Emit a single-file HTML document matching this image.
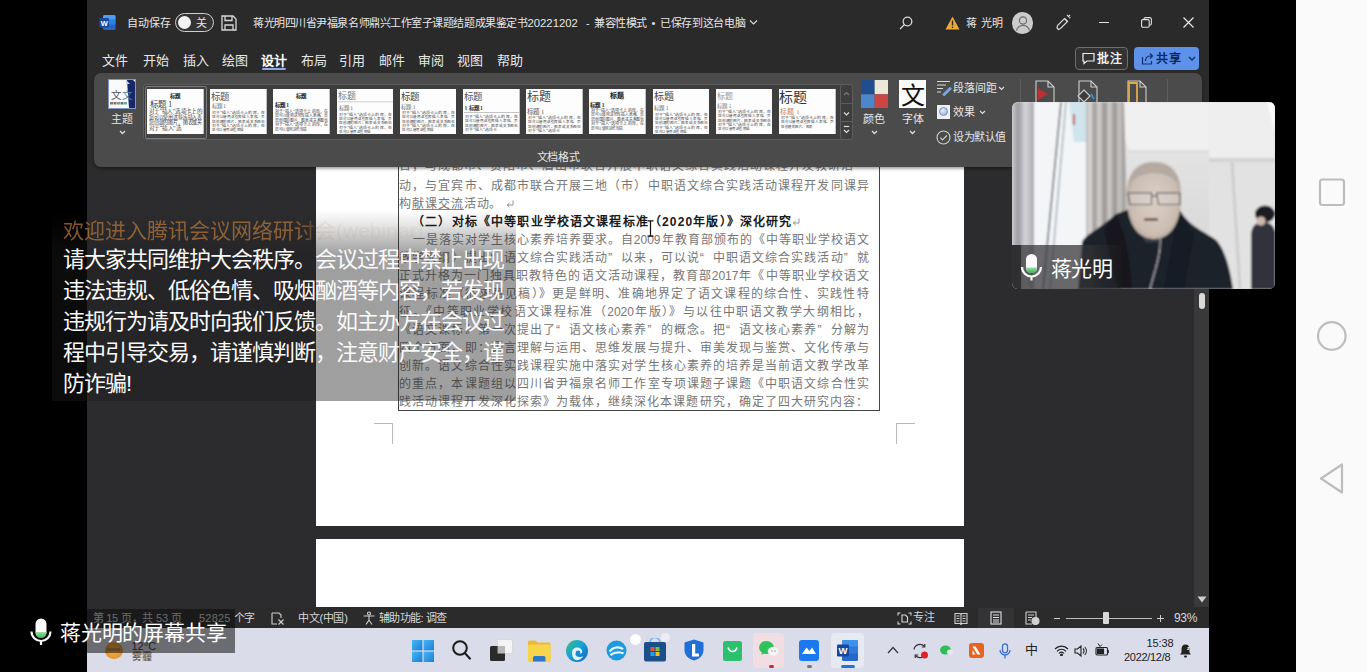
<!DOCTYPE html>
<html lang="zh-CN"><head><meta charset="utf-8">
<style>
*{margin:0;padding:0;box-sizing:border-box}
html,body{width:1367px;height:672px;overflow:hidden;background:#000;font-family:"Liberation Sans",sans-serif}
.a{position:absolute}
.t{position:absolute;white-space:nowrap;line-height:1}
#word{left:87px;top:0;width:1122px;height:628px;background:#2c2c2e}
#tbar{left:87px;top:0;width:1122px;height:166px;background:#2a2a2b}
.tt{color:#e6e6e6;font-size:11px;letter-spacing:-0.45px}
.menu{color:#e8e8e8;font-size:13px;letter-spacing:0}
#ribbon{left:94px;top:73px;width:1108px;height:94px;background:#4b4b4b;border-radius:7px;box-shadow:0 2px 3px rgba(0,0,0,.35)}
.page{background:#fff}
#status{left:87px;top:607px;width:1122px;height:21px;background:#2b2b2c}
.st{color:#d8d8d8;font-size:11px}
#task{left:87px;top:628px;width:1122px;height:44px;background:#dadcea}
#nav{left:1296px;top:0;width:71px;height:672px;background:#fafafa}
.doc{color:#767676;font-size:12px;position:absolute;white-space:nowrap;line-height:1;left:400px;width:468px;text-align:justify;text-align-last:justify}
.ql{display:inline-block;width:12px;text-align:right}.qr{display:inline-block;width:12px;text-align:left}

</style></head><body>
<div id="word" class="a"></div>
<div id="tbar" class="a"></div>

<div class="a page" style="left:316px;top:150px;width:648px;height:376px"></div>
<div class="a page" style="left:316px;top:539px;width:648px;height:68px"></div>
<div class="a" style="left:398px;top:150px;width:482px;height:261px;border:1px solid #444;border-top:none"></div>
<div class="a" style="left:374px;top:423px;width:19px;height:21px;border-top:1px solid #bbb;border-right:1px solid #bbb"></div>
<div class="a" style="left:896px;top:423px;width:19px;height:21px;border-top:1px solid #bbb;border-left:1px solid #bbb"></div>
<div class="doc" style="left:399.2px;top:160.0px;width:454.0px">台，与成都市、贵阳市、眉山市联合开展中职语文综合实践活动课程开发教研活</div>
<div class="doc" style="left:399.2px;top:180.0px;width:469.5px">动，与宜宾市、成都市联合开展三地（市）中职语文综合实践活动课程开发同课异</div>
<div class="doc" style="left:399.2px;top:198.0px;width:auto;text-align:left;text-align-last:auto;letter-spacing:0.9px">构献课交流活动。</div>
<div class="doc" style="left:412.2px;top:216.0px;width:auto;text-align:left;text-align-last:auto;letter-spacing:1.15px;font-weight:bold;color:#1a1a1a">（二）对标《中等职业学校语文课程标准（2020年版）》深化研究</div>
<div class="doc" style="left:412.7px;top:234.0px;width:456.0px">一是落实对学生核心素养培养要求。自2009年教育部颁布的《中等职业学校语文</div>
<div class="doc" style="left:399.2px;top:252.0px;width:469.5px">教学大纲》提出<span class="ql">“</span>语文综合实践活动<span class="qr">”</span>以来，可以说<span class="ql">“</span>中职语文综合实践活动<span class="qr">”</span>就</div>
<div class="doc" style="left:399.2px;top:270.0px;width:469.5px">正式升格为一门独具职教特色的语文活动课程，教育部2017年《中等职业学校语文</div>
<div class="doc" style="left:399.2px;top:288.0px;width:469.5px">课程标准（征求意见稿）》更是鲜明、准确地界定了语文课程的综合性、实践性特</div>
<div class="doc" style="left:399.2px;top:306.0px;width:469.5px">征。《中等职业学校语文课程标准（2020年版）》与以往中职语文教学大纲相比，</div>
<div class="doc" style="left:399.2px;top:324.0px;width:469.5px">《语文课标》第一次提出了<span class="ql">“</span>语文核心素养<span class="qr">”</span>的概念。把<span class="ql">“</span>语文核心素养<span class="qr">”</span>分解为</div>
<div class="doc" style="left:399.2px;top:342.0px;width:469.5px">四个方面，即：语言理解与运用、思维发展与提升、审美发现与鉴赏、文化传承与</div>
<div class="doc" style="left:399.2px;top:360.0px;width:469.5px">创新。语文综合性实践课程实施中落实对学生核心素养的培养是当前语文教学改革</div>
<div class="doc" style="left:399.2px;top:378.0px;width:469.5px">的重点，本课题组以四川省尹福泉名师工作室专项课题子课题《中职语文综合性实</div>
<div class="doc" style="left:399.2px;top:396.0px;width:469.0px">践活动课程开发深化探索》为载体，继续深化本课题研究，确定了四大研究内容：</div>
<svg class="a" style="left:505.5px;top:199.5px" width="8" height="8" viewBox="0 0 8 8" fill="none" stroke="#888" stroke-width="0.9"><path d="M7 0.5v4.5H1.5M3.5 3L1.2 5l2.3 2"/></svg>
<svg class="a" style="left:792px;top:217.5px" width="8" height="8" viewBox="0 0 8 8" fill="none" stroke="#888" stroke-width="0.9"><path d="M7 0.5v4.5H1.5M3.5 3L1.2 5l2.3 2"/></svg>
<div class="a" style="left:411.5px;top:209px;width:52px;height:1.3px;background:#6f86c8"></div>
<svg class="a" style="left:646px;top:220px" width="9" height="17" viewBox="0 0 9 17" fill="none" stroke="#111" stroke-width="1.2">
 <path d="M1.5 0.8h6M1.5 16.2h6M4.5 0.8v15.4"/></svg>
<div id="ribbon" class="a"></div>
<svg class="a" style="left:108px;top:79px" width="28" height="30" viewBox="0 0 28 30">
 <rect x="0.5" y="0.5" width="27" height="29" fill="#fafafa" stroke="#7f97c4" stroke-width="1"/>
 <path d="M19 1h6l2 2v26h-6z" fill="#17286a"/>
 <path d="M18 1l4 4h-4z" fill="#c8d4e8"/>
 <text x="3" y="20" font-size="10.5" fill="#555" font-family="Liberation Serif">文</text>
 <text x="13.5" y="20" font-size="10.5" fill="#4a8aa8" font-family="Liberation Serif">文</text>
 <rect x="2" y="23" width="3" height="2.5" fill="#7a7a80"/><rect x="5.5" y="23" width="3" height="2.5" fill="#9a6a5a"/><rect x="9" y="23" width="3" height="2.5" fill="#8a9a6a"/><rect x="12.5" y="23" width="3" height="2.5" fill="#4a7a8a"/><rect x="16" y="23" width="3" height="2.5" fill="#7aa0a0"/>
</svg>
<div class="t tt" style="left:111px;top:114px;font-size:11px;letter-spacing:0">主题</div>
<svg class="a" style="left:118.5px;top:129.5px" width="7" height="5" viewBox="0 0 7 5" fill="none" stroke="#ddd" stroke-width="1.3"><path d="M1 1l2.5 2.5L6 1"/></svg>
<div class="a" style="left:143px;top:84px;width:710px;height:56px;border:1px solid #5c5c5c;border-radius:3px;background:#3e3e3e"></div>
<div class="a" style="left:144.5px;top:85.5px;width:62px;height:53px;border:1px solid #7a7a7a;border-radius:2px;background:#444"></div>
<svg class="a" style="left:147.0px;top:88.6px" width="56.7" height="45.7" viewBox="0 0 56.7 45.7"><rect width="56.7" height="45.7" fill="#fdfdfd"/><text x="28.3" y="9" font-size="5.5" fill="#222" font-weight="bold" text-anchor="middle" font-family="Liberation Serif">标题</text><text x="3" y="18" font-size="8.5" fill="#444" font-weight="normal" text-anchor="start" font-family="Liberation Serif">标题 1</text><text x="2" y="24.3" font-size="5.2" fill="#444" font-family="Liberation Serif" textLength="53" lengthAdjust="spacingAndGlyphs">对于“插入”选项卡上的</text><text x="2" y="29.9" font-size="5.2" fill="#444" font-family="Liberation Serif" textLength="53" lengthAdjust="spacingAndGlyphs">您可以使用这些库插入表</text><text x="2" y="35.5" font-size="5.2" fill="#444" font-family="Liberation Serif" textLength="53" lengthAdjust="spacingAndGlyphs">您创建的图片、图表或关</text><text x="2" y="41.1" font-size="5.2" fill="#444" font-family="Liberation Serif" textLength="32" lengthAdjust="spacingAndGlyphs">对于“插入”选</text></svg>
<svg class="a" style="left:210.2px;top:88.6px" width="56.7" height="45.7" viewBox="0 0 56.7 45.7"><rect width="56.7" height="45.7" fill="#fdfdfd"/><text x="1.5" y="11" font-size="9.5" fill="#555" font-weight="normal" text-anchor="start" font-family="Liberation Serif">标题</text><text x="2" y="19" font-size="5.5" fill="#666" font-weight="normal" text-anchor="start" font-family="Liberation Serif">标题 1</text><text x="2" y="25.0" font-size="3.8" fill="#444" font-family="Liberation Serif" textLength="53" lengthAdjust="spacingAndGlyphs">对于“插入”选项卡上的库，在</text><text x="2" y="29.3" font-size="3.8" fill="#444" font-family="Liberation Serif" textLength="53" lengthAdjust="spacingAndGlyphs">您可以使用这些库插入表格、页</text><text x="2" y="33.6" font-size="3.8" fill="#444" font-family="Liberation Serif" textLength="53" lengthAdjust="spacingAndGlyphs">您创建的图片、图表或关系图也</text><text x="2" y="37.9" font-size="3.8" fill="#444" font-family="Liberation Serif" textLength="53" lengthAdjust="spacingAndGlyphs">对于“插入”选项卡上的库，在</text><text x="2" y="42.2" font-size="3.8" fill="#444" font-family="Liberation Serif" textLength="32" lengthAdjust="spacingAndGlyphs">您可以使用这些库插</text></svg>
<svg class="a" style="left:273.4px;top:88.6px" width="56.7" height="45.7" viewBox="0 0 56.7 45.7"><rect width="56.7" height="45.7" fill="#fdfdfd"/><text x="28.3" y="9" font-size="5.5" fill="#222" font-weight="bold" text-anchor="middle" font-family="Liberation Serif">标题</text><text x="2" y="18" font-size="5.5" fill="#222" font-weight="bold" text-anchor="start" font-family="Liberation Serif">标题 1</text><text x="2" y="24.1" font-size="4.0" fill="#444" font-family="Liberation Serif" textLength="53" lengthAdjust="spacingAndGlyphs">对于“插入”选项卡上的库，在</text><text x="2" y="28.5" font-size="4.0" fill="#444" font-family="Liberation Serif" textLength="53" lengthAdjust="spacingAndGlyphs">您可以使用这些库插入表格、页</text><text x="2" y="32.9" font-size="4.0" fill="#444" font-family="Liberation Serif" textLength="53" lengthAdjust="spacingAndGlyphs">您创建的图片、图表或关系图也</text><text x="2" y="37.3" font-size="4.0" fill="#444" font-family="Liberation Serif" textLength="53" lengthAdjust="spacingAndGlyphs">对于“插入”选项卡上的库，在</text><text x="2" y="41.7" font-size="4.0" fill="#444" font-family="Liberation Serif" textLength="32" lengthAdjust="spacingAndGlyphs">您可以使用这些库插</text></svg>
<svg class="a" style="left:336.6px;top:88.6px" width="56.7" height="45.7" viewBox="0 0 56.7 45.7"><rect width="56.7" height="45.7" fill="#fdfdfd"/><text x="1.5" y="10" font-size="9" fill="#777" font-weight="normal" text-anchor="start" font-family="Liberation Serif">标题</text><rect x="1" y="12.5" width="55" height="0.7" fill="#bbb"/><text x="2" y="21" font-size="5.5" fill="#666" font-weight="normal" text-anchor="start" font-family="Liberation Serif">标题 1</text><text x="2" y="27.0" font-size="3.8" fill="#444" font-family="Liberation Serif" textLength="53" lengthAdjust="spacingAndGlyphs">对于“插入”选项卡上的库，在</text><text x="2" y="31.2" font-size="3.8" fill="#444" font-family="Liberation Serif" textLength="53" lengthAdjust="spacingAndGlyphs">您可以使用这些库插入表格、页</text><text x="2" y="35.4" font-size="3.8" fill="#444" font-family="Liberation Serif" textLength="53" lengthAdjust="spacingAndGlyphs">您创建的图片、图表或关系图也</text><text x="2" y="39.6" font-size="3.8" fill="#444" font-family="Liberation Serif" textLength="53" lengthAdjust="spacingAndGlyphs">对于“插入”选项卡上的库，在</text><text x="2" y="43.8" font-size="3.8" fill="#444" font-family="Liberation Serif" textLength="32" lengthAdjust="spacingAndGlyphs">您可以使用这些库插</text></svg>
<svg class="a" style="left:399.8px;top:88.6px" width="56.7" height="45.7" viewBox="0 0 56.7 45.7"><rect width="56.7" height="45.7" fill="#fdfdfd"/><text x="1" y="11" font-size="9.5" fill="#444" font-weight="normal" text-anchor="start" font-family="Liberation Serif">标题</text><text x="1.5" y="20" font-size="5.5" fill="#666" font-weight="normal" text-anchor="start" font-family="Liberation Serif">标题 1</text><text x="2" y="25.0" font-size="3.8" fill="#444" font-family="Liberation Serif" textLength="53" lengthAdjust="spacingAndGlyphs">对于“插入”选项卡上的库，在</text><text x="2" y="29.3" font-size="3.8" fill="#444" font-family="Liberation Serif" textLength="53" lengthAdjust="spacingAndGlyphs">您可以使用这些库插入表格、页</text><text x="2" y="33.6" font-size="3.8" fill="#444" font-family="Liberation Serif" textLength="53" lengthAdjust="spacingAndGlyphs">您创建的图片、图表或关系图也</text><text x="2" y="37.9" font-size="3.8" fill="#444" font-family="Liberation Serif" textLength="53" lengthAdjust="spacingAndGlyphs">对于“插入”选项卡上的库，在</text><text x="2" y="42.2" font-size="3.8" fill="#444" font-family="Liberation Serif" textLength="32" lengthAdjust="spacingAndGlyphs">您可以使用这些库插</text></svg>
<svg class="a" style="left:463.0px;top:88.6px" width="56.7" height="45.7" viewBox="0 0 56.7 45.7"><rect width="56.7" height="45.7" fill="#fdfdfd"/><text x="1" y="11" font-size="9.5" fill="#555" font-weight="normal" text-anchor="start" font-family="Liberation Serif">标题</text><text x="1.5" y="21" font-size="5.5" fill="#333" font-weight="bold" text-anchor="start" font-family="Liberation Serif">1 标题 1</text><rect x="1" y="23" width="55" height="0.7" fill="#aaa"/><text x="2" y="29.0" font-size="3.8" fill="#444" font-family="Liberation Serif" textLength="53" lengthAdjust="spacingAndGlyphs">对于“插入”选项卡上的库，在</text><text x="2" y="33.3" font-size="3.8" fill="#444" font-family="Liberation Serif" textLength="53" lengthAdjust="spacingAndGlyphs">您可以使用这些库插入表格、页</text><text x="2" y="37.6" font-size="3.8" fill="#444" font-family="Liberation Serif" textLength="53" lengthAdjust="spacingAndGlyphs">您创建的图片、图表或关系图也</text><text x="2" y="41.9" font-size="3.8" fill="#444" font-family="Liberation Serif" textLength="32" lengthAdjust="spacingAndGlyphs">对于“插入”选项卡</text></svg>
<svg class="a" style="left:526.2px;top:88.6px" width="56.7" height="45.7" viewBox="0 0 56.7 45.7"><rect width="56.7" height="45.7" fill="#fdfdfd"/><text x="1" y="12.5" font-size="12" fill="#444" font-weight="normal" text-anchor="start" font-family="Liberation Serif">标题</text><text x="1.5" y="25" font-size="6.5" fill="#555" font-weight="normal" text-anchor="start" font-family="Liberation Serif">标题 1</text><text x="2" y="30.0" font-size="3.8" fill="#444" font-family="Liberation Serif" textLength="53" lengthAdjust="spacingAndGlyphs">对于“插入”选项卡上的库，在</text><text x="2" y="34.4" font-size="3.8" fill="#444" font-family="Liberation Serif" textLength="53" lengthAdjust="spacingAndGlyphs">您可以使用这些库插入表格、页</text><text x="2" y="38.8" font-size="3.8" fill="#444" font-family="Liberation Serif" textLength="53" lengthAdjust="spacingAndGlyphs">您创建的图片、图表或关系图也</text><text x="2" y="43.2" font-size="3.8" fill="#444" font-family="Liberation Serif" textLength="32" lengthAdjust="spacingAndGlyphs">对于“插入”选项卡</text></svg>
<svg class="a" style="left:589.4px;top:88.6px" width="56.7" height="45.7" viewBox="0 0 56.7 45.7"><rect width="56.7" height="45.7" fill="#fdfdfd"/><text x="28.3" y="9" font-size="7" fill="#222" font-weight="bold" text-anchor="middle" font-family="Liberation Serif">标题</text><text x="1.5" y="18" font-size="5.5" fill="#222" font-weight="bold" text-anchor="start" font-family="Liberation Serif">标题 1</text><text x="2" y="23.1" font-size="4.0" fill="#444" font-family="Liberation Serif" textLength="53" lengthAdjust="spacingAndGlyphs">对于“插入”选项卡上的库，在</text><text x="2" y="27.5" font-size="4.0" fill="#444" font-family="Liberation Serif" textLength="53" lengthAdjust="spacingAndGlyphs">您可以使用这些库插入表格、页</text><text x="2" y="31.9" font-size="4.0" fill="#444" font-family="Liberation Serif" textLength="53" lengthAdjust="spacingAndGlyphs">您创建的图片、图表或关系图也</text><text x="2" y="36.3" font-size="4.0" fill="#444" font-family="Liberation Serif" textLength="53" lengthAdjust="spacingAndGlyphs">对于“插入”选项卡上的库，在</text><text x="2" y="40.7" font-size="4.0" fill="#444" font-family="Liberation Serif" textLength="32" lengthAdjust="spacingAndGlyphs">您可以使用这些库插</text></svg>
<svg class="a" style="left:652.6px;top:88.6px" width="56.7" height="45.7" viewBox="0 0 56.7 45.7"><rect width="56.7" height="45.7" fill="#fdfdfd"/><text x="1" y="11" font-size="10" fill="#444" font-weight="normal" text-anchor="start" font-family="Liberation Serif">标题</text><text x="1.5" y="21" font-size="5.5" fill="#666" font-weight="normal" text-anchor="start" font-family="Liberation Serif">标题 1</text><text x="2" y="27.0" font-size="3.8" fill="#444" font-family="Liberation Serif" textLength="53" lengthAdjust="spacingAndGlyphs">对于“插入”选项卡上的库，在</text><text x="2" y="31.2" font-size="3.8" fill="#444" font-family="Liberation Serif" textLength="53" lengthAdjust="spacingAndGlyphs">您可以使用这些库插入表格、页</text><text x="2" y="35.4" font-size="3.8" fill="#444" font-family="Liberation Serif" textLength="53" lengthAdjust="spacingAndGlyphs">您创建的图片、图表或关系图也</text><text x="2" y="39.6" font-size="3.8" fill="#444" font-family="Liberation Serif" textLength="53" lengthAdjust="spacingAndGlyphs">对于“插入”选项卡上的库，在</text><text x="2" y="43.8" font-size="3.8" fill="#444" font-family="Liberation Serif" textLength="32" lengthAdjust="spacingAndGlyphs">您可以使用这些库插</text></svg>
<svg class="a" style="left:715.8px;top:88.6px" width="56.7" height="45.7" viewBox="0 0 56.7 45.7"><rect width="56.7" height="45.7" fill="#fdfdfd"/><text x="1" y="10" font-size="8" fill="#999" font-weight="normal" text-anchor="start" font-family="Liberation Serif">标题</text><text x="1.5" y="19" font-size="5.5" fill="#777" font-weight="normal" text-anchor="start" font-family="Liberation Serif">标题 1</text><text x="2" y="24.0" font-size="3.8" fill="#444" font-family="Liberation Serif" textLength="53" lengthAdjust="spacingAndGlyphs">对于“插入”选项卡上的库，在</text><text x="2" y="28.3" font-size="3.8" fill="#444" font-family="Liberation Serif" textLength="53" lengthAdjust="spacingAndGlyphs">您可以使用这些库插入表格、页</text><text x="2" y="32.6" font-size="3.8" fill="#444" font-family="Liberation Serif" textLength="53" lengthAdjust="spacingAndGlyphs">您创建的图片、图表或关系图也</text><text x="2" y="36.9" font-size="3.8" fill="#444" font-family="Liberation Serif" textLength="53" lengthAdjust="spacingAndGlyphs">对于“插入”选项卡上的库，在</text><text x="2" y="41.2" font-size="3.8" fill="#444" font-family="Liberation Serif" textLength="32" lengthAdjust="spacingAndGlyphs">您可以使用这些库插</text></svg>
<svg class="a" style="left:779.0px;top:88.6px" width="56.7" height="45.7" viewBox="0 0 56.7 45.7"><rect width="56.7" height="45.7" fill="#fdfdfd"/><text x="0.5" y="13.5" font-size="14" fill="#333" font-weight="normal" text-anchor="start" font-family="Liberation Serif">标题</text><text x="1.5" y="25" font-size="7" fill="#d08060" font-weight="normal" text-anchor="start" font-family="Liberation Serif">标题 1</text><text x="2" y="30.0" font-size="3.8" fill="#444" font-family="Liberation Serif" textLength="53" lengthAdjust="spacingAndGlyphs">对于“插入”选项卡上的库，在</text><text x="2" y="34.4" font-size="3.8" fill="#444" font-family="Liberation Serif" textLength="53" lengthAdjust="spacingAndGlyphs">您可以使用这些库插入表格、页</text><text x="2" y="38.8" font-size="3.8" fill="#444" font-family="Liberation Serif" textLength="32" lengthAdjust="spacingAndGlyphs">您创建的图片、图表</text></svg>
<div class="a" style="left:839.5px;top:84px;width:13.5px;height:56px;border:1px solid #5c5c5c;border-radius:3px;background:#3e3e3e"></div>
<div class="a" style="left:839.5px;top:102.5px;width:13.5px;height:1px;background:#5c5c5c"></div>
<div class="a" style="left:839.5px;top:121px;width:13.5px;height:1px;background:#5c5c5c"></div>
<svg class="a" style="left:840px;top:84px" width="13" height="56" viewBox="0 0 13 56" fill="none" stroke-width="1.2">
 <path d="M4 11l2.5-2.5L9 11" stroke="#777"/>
 <path d="M4 28.5l2.5 2.5L9 28.5" stroke="#ddd"/>
 <path d="M3.8 42.5h5.4" stroke="#ddd"/><path d="M4 46l2.5 2.5L9 46" stroke="#ddd"/>
</svg>
<svg class="a" style="left:861px;top:79.7px" width="27.3" height="28.7" viewBox="0 0 27.3 28.7">
 <rect x="0" y="0" width="13.65" height="14.35" fill="#1f4d8f"/>
 <rect x="13.65" y="0" width="13.65" height="14.35" fill="#ebe8da"/>
 <rect x="0" y="14.35" width="13.65" height="14.35" fill="#4c87cc"/>
 <rect x="13.65" y="14.35" width="13.65" height="14.35" fill="#cc4444"/>
</svg>
<div class="t tt" style="left:863px;top:113.5px;font-size:11px;letter-spacing:0.1px">颜色</div>
<svg class="a" style="left:871px;top:129.5px" width="7" height="5" viewBox="0 0 7 5" fill="none" stroke="#ddd" stroke-width="1.3"><path d="M1 1l2.5 2.5L6 1"/></svg>
<div class="a" style="left:899px;top:79.7px;width:27.3px;height:28.7px;background:#fbfbfb"></div>
<div class="t" style="left:900.5px;top:83.5px;font-size:24px;color:#111;font-family:'Liberation Serif',serif">文</div>
<div class="t tt" style="left:901.5px;top:113.5px;font-size:11px;letter-spacing:0.1px">字体</div>
<svg class="a" style="left:909px;top:129.5px" width="7" height="5" viewBox="0 0 7 5" fill="none" stroke="#ddd" stroke-width="1.3"><path d="M1 1l2.5 2.5L6 1"/></svg>
<svg class="a" style="left:935.5px;top:80px" width="16" height="16" viewBox="0 0 16 16" fill="none" stroke="#d8d8d8" stroke-width="1.1">
 <path d="M1 1.5h13M1 5h9M1 8.5h6M1 12h4"/>
 <path d="M7 14.5l7-7 1.2 1.2-7 7z" fill="#7aa7e0" stroke="#7aa7e0"/>
</svg>
<div class="t tt" style="left:953px;top:83px;font-size:11px;letter-spacing:-0.1px">段落间距</div>
<svg class="a" style="left:997.5px;top:85.5px" width="7" height="5" viewBox="0 0 7 5" fill="none" stroke="#ddd" stroke-width="1.2"><path d="M1 1l2.5 2.5L6 1"/></svg>
<div class="a" style="left:937px;top:104.7px;width:12.5px;height:14px;background:#f0f0f0"></div>
<div class="a" style="left:938.8px;top:107px;width:9px;height:9px;border-radius:50%;background:radial-gradient(circle at 40% 35%,#e8eefc,#8ea8dc);border:1px solid #7a90c0"></div>
<div class="t tt" style="left:953px;top:107px;font-size:11px;letter-spacing:0">效果</div>
<svg class="a" style="left:978.5px;top:109.5px" width="7" height="5" viewBox="0 0 7 5" fill="none" stroke="#ddd" stroke-width="1.2"><path d="M1 1l2.5 2.5L6 1"/></svg>
<svg class="a" style="left:935.5px;top:129.5px" width="15" height="15" viewBox="0 0 15 15" fill="none" stroke="#cfcfcf" stroke-width="1.1">
 <circle cx="7.5" cy="7.5" r="6.5"/><path d="M4.3 7.6l2.3 2.3 4.2-4.4"/>
</svg>
<div class="t tt" style="left:953px;top:131.5px;font-size:11px;letter-spacing:-0.4px">设为默认值</div>
<div class="t tt" style="left:536.5px;top:152px;font-size:11px;letter-spacing:-0.2px">文档格式</div>
<div class="a" style="left:1020px;top:79px;width:1px;height:70px;background:#5e5e5e"></div>
<div class="a" style="left:1166.5px;top:79px;width:1px;height:70px;background:#5e5e5e"></div>
<svg class="a" style="left:1034px;top:80px" width="22" height="30" viewBox="0 0 22 30" fill="none" stroke="#cfcfcf" stroke-width="1.1">
 <path d="M2 1h12l6 6v22H2z"/><path d="M14 1v6h6"/>
 <path d="M4 8l10 6-10 6z" fill="#b83030" stroke="none"/>
</svg>
<svg class="a" style="left:1075px;top:80px" width="24" height="30" viewBox="0 0 24 30" fill="none" stroke="#cfcfcf" stroke-width="1.1">
 <path d="M4 1h12l6 6v22H4z"/><path d="M16 1v6h6"/>
 <path d="M3 16l6-6 6 6-6 6z" fill="#3c3c3c"/><path d="M16 14l3 5" stroke="#3a8ad0" stroke-width="2"/>
</svg>
<svg class="a" style="left:1126px;top:80px" width="22" height="30" viewBox="0 0 22 30" fill="none" stroke-width="1.1">
 <path d="M2 1h12l6 6v22H2z" stroke="#cfcfcf"/><path d="M14 1v6h6" stroke="#cfcfcf"/>
 <path d="M3 3h8v25H3z" stroke="#e0a850" stroke-width="1.8"/>
</svg>
<!-- title bar -->
<svg class="a" style="left:99px;top:14px" width="17" height="17" viewBox="0 0 17 17">
 <rect x="4" y="1" width="12.5" height="15" rx="1.5" fill="#2566c8"/>
 <rect x="4" y="1" width="12.5" height="5" rx="1.5" fill="#4a9ff0"/>
 <rect x="4" y="5.5" width="12.5" height="5" fill="#2f80e0"/>
 <rect x="0.5" y="4" width="9.5" height="9.5" rx="1" fill="#1a4aa0"/>
 <text x="5.3" y="11.8" font-size="7.5" font-weight="bold" fill="#fff" text-anchor="middle" font-family="Liberation Sans">W</text>
</svg>
<div class="t tt" style="left:126.5px;top:18px;letter-spacing:0.2px">自动保存</div>
<div class="a" style="left:175px;top:13px;width:39px;height:19px;border:1.4px solid #cfcfcf;border-radius:10px;background:#343434"></div>
<div class="a" style="left:178px;top:16px;width:13px;height:13px;border-radius:50%;background:#f4f4f4"></div>
<div class="t tt" style="left:196px;top:18px">关</div>
<svg class="a" style="left:221px;top:15px" width="16" height="16" viewBox="0 0 16 16" fill="none" stroke="#d8d8d8" stroke-width="1.3">
 <path d="M1 1h11l3 3v11H1z"/><path d="M4 1v4.5h7V1"/><path d="M4 15v-5h8v5"/>
</svg>
<div class="t tt" style="left:253px;top:18px;letter-spacing:-0.45px">蒋光明四川省尹福泉名师鼎兴工作室子课题结题成果鉴定书</div>
<div class="t tt" style="left:527.5px;top:17.5px;font-size:11.3px;letter-spacing:0">20221202</div>
<div class="t tt" style="left:586px;top:18px;letter-spacing:0">-</div>
<div class="t tt" style="left:594px;top:18px">兼容性模式</div>
<div class="t tt" style="left:651.5px;top:18px;letter-spacing:0">•</div>
<div class="t tt" style="left:660px;top:18px;letter-spacing:-0.35px">已保存到这台电脑</div>
<svg class="a" style="left:749px;top:19px" width="9" height="7" viewBox="0 0 9 7" fill="none" stroke="#d8d8d8" stroke-width="1.2"><path d="M1 1.5l3.5 3.5 3.5-3.5"/></svg>
<svg class="a" style="left:899px;top:16px" width="14" height="14" viewBox="0 0 14 14" fill="none" stroke="#d8d8d8" stroke-width="1.3"><circle cx="8.5" cy="5.5" r="4.3"/><path d="M5.5 8.5L1 13"/></svg>
<svg class="a" style="left:945px;top:15.5px" width="15" height="14" viewBox="0 0 15 14"><path d="M7.5 0.5L14.5 13.5H0.5z" fill="#e9a93c"/><rect x="6.8" y="4.5" width="1.4" height="5" fill="#3a2a10"/><rect x="6.8" y="10.6" width="1.4" height="1.4" fill="#3a2a10"/></svg>
<div class="t tt" style="left:966px;top:18px;letter-spacing:0.3px">蒋 光明</div>
<div class="a" style="left:1011.5px;top:12px;width:21.5px;height:21.5px;border-radius:50%;background:#cbcbcb;overflow:hidden">
 <svg width="22" height="22" viewBox="0 0 22 22" fill="none" stroke="#6a6a6a" stroke-width="1.2"><circle cx="11" cy="8.5" r="3.6"/><path d="M4.5 18.5c1-3.5 3.5-5 6.5-5s5.5 1.5 6.5 5"/></svg>
</div>
<svg class="a" style="left:1055px;top:14px" width="17" height="17" viewBox="0 0 17 17" fill="none" stroke="#d8d8d8" stroke-width="1.2"><path d="M2 14l1.5 1.5 2-1 7-7-3-3-7 7z"/><path d="M9.5 4.5l3 3"/><path d="M12 2l1-1M14 4l1.5-.5M13 3l2-2"/></svg>
<div class="a" style="left:1099px;top:21.5px;width:10px;height:1.3px;background:#e0e0e0"></div>
<svg class="a" style="left:1141px;top:17px" width="11" height="11" viewBox="0 0 11 11" fill="none" stroke="#e0e0e0" stroke-width="1.1"><rect x="0.6" y="2.6" width="7.6" height="7.6" rx="1.2"/><path d="M3 2.6V2a1.4 1.4 0 0 1 1.4-1.4h4.2A1.8 1.8 0 0 1 10.4 2.4v4.2A1.4 1.4 0 0 1 9 8"/></svg>
<svg class="a" style="left:1183px;top:17px" width="11" height="11" viewBox="0 0 11 11" fill="none" stroke="#e8e8e8" stroke-width="1.2"><path d="M0.5 0.5l10 10M10.5 0.5l-10 10"/></svg>
<!-- menu -->
<div class="t menu" style="left:101.5px;top:53.5px">文件</div>
<div class="t menu" style="left:143.3px;top:53.5px">开始</div>
<div class="t menu" style="left:182.8px;top:53.5px">插入</div>
<div class="t menu" style="left:221.7px;top:53.5px">绘图</div>
<div class="t menu" style="left:261.0px;top:53.5px;font-weight:bold;color:#fff">设计</div>
<div class="a" style="left:262px;top:68px;width:24px;height:2px;background:#8fa8e8;border-radius:1px"></div>
<div class="t menu" style="left:300.7px;top:53.5px">布局</div>
<div class="t menu" style="left:339.0px;top:53.5px">引用</div>
<div class="t menu" style="left:378.7px;top:53.5px">邮件</div>
<div class="t menu" style="left:418.0px;top:53.5px">审阅</div>
<div class="t menu" style="left:457.0px;top:53.5px">视图</div>
<div class="t menu" style="left:496.5px;top:53.5px">帮助</div>
<!-- comment / share -->
<div class="a" style="left:1075px;top:47px;width:53px;height:23px;border:1px solid #6e6e6e;border-radius:4px;background:#333"></div>
<svg class="a" style="left:1082px;top:52px" width="13" height="13" viewBox="0 0 13 13" fill="none" stroke="#eee" stroke-width="1.2"><path d="M1 1.5h11v7.5H5l-3 2.5V9H1z"/></svg>
<div class="t tt" style="left:1097px;top:53px;font-size:12px;letter-spacing:0.5px;font-weight:bold;color:#f0f0f0">批注</div>
<div class="a" style="left:1134px;top:47px;width:65px;height:23px;border-radius:4px;background:#5e92ea"></div>
<svg class="a" style="left:1141px;top:52px" width="13" height="13" viewBox="0 0 13 13" fill="none" stroke="#10306a" stroke-width="1.2"><path d="M1.5 5v7h9V9"/><path d="M4.5 9c0-3 2-5 5-5h2M9 1.5l2.5 2.5L9 6.5"/></svg>
<div class="t tt" style="left:1156px;top:53px;font-size:12px;letter-spacing:0.5px;font-weight:bold;color:#0e2a60">共享</div>
<svg class="a" style="left:1188px;top:56px" width="8" height="6" viewBox="0 0 8 6" fill="none" stroke="#0e2a60" stroke-width="1.3"><path d="M1 1l3 3 3-3"/></svg>

<div class="a" style="left:1194px;top:166px;width:15px;height:441px;background:#393939"></div>
<div class="a" style="left:1198.5px;top:292.5px;width:6.5px;height:16px;border-radius:3px;background:#d9d9d9"></div>
<svg class="a" style="left:1197px;top:596px" width="10" height="7" viewBox="0 0 10 7"><path d="M0.5 0.5h9L5 6.5z" fill="#cfcfcf"/></svg>
<div id="status" class="a"></div>
<div class="t st" style="left:92.5px;top:612.5px;font-size:11px;letter-spacing:-0.2px">第 15 页，共 53 页</div>
<div class="t st" style="left:199px;top:612.5px;font-size:11px;letter-spacing:0.2px">52825</div>
<div class="t st" style="left:233.5px;top:612.5px;font-size:11px;letter-spacing:-0.5px">个字</div>
<svg class="a" style="left:270.5px;top:611.5px" width="14" height="13" viewBox="0 0 14 13" fill="none" stroke="#d0d0d0" stroke-width="1.1"><path d="M1 1h7l2 2v3M1 1v11h5"/><path d="M7.5 7.5l5 5M12.5 7.5l-5 5"/></svg>
<div class="t st" style="left:298px;top:612.5px;font-size:11px;letter-spacing:-0.3px">中文(中国)</div>
<svg class="a" style="left:362px;top:611px" width="14" height="14" viewBox="0 0 14 14" fill="none" stroke="#d0d0d0" stroke-width="1.1"><circle cx="7" cy="2.5" r="1.5"/><path d="M1.5 5h11M7 5v4l-3 4.5M7 9l3 4.5"/></svg>
<div class="t st" style="left:378.5px;top:612.5px;font-size:11px;letter-spacing:-0.5px">辅助功能: 调查</div>
<svg class="a" style="left:897px;top:611.5px" width="15" height="13" viewBox="0 0 15 13" fill="none" stroke="#d8d8d8" stroke-width="1.1"><path d="M1 3.5V1h2.5M11.5 1H14v2.5M14 9.5V12h-2.5M3.5 12H1V9.5"/><path d="M5 3h3.5L10.5 5v5H5z"/></svg>
<div class="t st" style="left:913px;top:612px;font-size:11px;letter-spacing:-0.4px">专注</div>
<svg class="a" style="left:954px;top:611.5px" width="14" height="13" viewBox="0 0 14 13" fill="none" stroke="#d0d0d0" stroke-width="1.1"><path d="M1 1.5h5l1 1 1-1h5v10H8l-1 1-1-1H1z M7 2.5v9"/><path d="M2.5 4h3M2.5 6.5h3M2.5 9h3M8.5 4h3M8.5 6.5h3M8.5 9h3"/></svg>
<div class="a" style="left:978px;top:607.5px;width:35.5px;height:20px;background:#333335"></div>
<svg class="a" style="left:990px;top:611px" width="12" height="14" viewBox="0 0 12 14" fill="none" stroke="#e0e0e0" stroke-width="1.1"><rect x="1" y="1" width="10" height="12"/><path d="M3 4h6M3 6.5h6M3 9h6M3 11h6"/></svg>
<svg class="a" style="left:1024.5px;top:611px" width="15" height="14" viewBox="0 0 15 14" fill="none" stroke="#d0d0d0" stroke-width="1.1"><path d="M1 1h10v5M1 1v12h6"/><path d="M3 4h6M3 6.5h4M3 9h3"/><circle cx="10.5" cy="10" r="3.5" fill="#d0d0d0"/></svg>
<div class="a" style="left:1054px;top:617.5px;width:6px;height:1px;background:#cfcfcf"></div>
<div class="a" style="left:1065.5px;top:617.5px;width:86px;height:1.2px;background:#bdbdbd"></div>
<div class="a" style="left:1103px;top:612px;width:6px;height:12px;border-radius:1px;background:#d8d8d8"></div>
<div class="a" style="left:1156.5px;top:617.5px;width:7px;height:1px;background:#cfcfcf"></div>
<div class="a" style="left:1159.5px;top:614.5px;width:1px;height:7px;background:#cfcfcf"></div>
<div class="t st" style="left:1174px;top:612px;font-size:12px;letter-spacing:-0.3px">93%</div>

<div id="task" class="a"></div>
<!-- weather -->
<div class="a" style="left:105px;top:641.5px;width:17.5px;height:17px;border-radius:50%;background:radial-gradient(circle at 50% 45%,#f3b24a,#e08a20)"></div>
<div class="a" style="left:107px;top:648px;width:13px;height:3px;background:#b8782e;opacity:.7"></div>
<div class="t" style="left:131.5px;top:641px;font-size:11px;color:#333">12°C</div>
<div class="t" style="left:131.5px;top:652px;font-size:10px;color:#444">雾霾</div>
<!-- windows -->
<svg class="a" style="left:412px;top:639.5px" width="22" height="22" viewBox="0 0 22 22">
 <defs><linearGradient id="wg" x1="0" y1="0" x2="1" y2="1"><stop offset="0" stop-color="#47b6f5"/><stop offset="1" stop-color="#1a7fd6"/></linearGradient></defs>
 <rect x="0" y="0" width="10.4" height="10.4" fill="url(#wg)"/><rect x="11.6" y="0" width="10.4" height="10.4" fill="url(#wg)"/>
 <rect x="0" y="11.6" width="10.4" height="10.4" fill="url(#wg)"/><rect x="11.6" y="11.6" width="10.4" height="10.4" fill="url(#wg)"/>
</svg>
<!-- search -->
<svg class="a" style="left:452px;top:640px" width="20" height="21" viewBox="0 0 20 21" fill="none" stroke="#1a1a1a" stroke-width="2">
 <circle cx="8" cy="8" r="6.8"/><path d="M13 13.3l5.5 6"/></svg>
<!-- task view -->
<svg class="a" style="left:489.5px;top:639px" width="23" height="22" viewBox="0 0 23 22">
 <rect x="7.5" y="0.5" width="15" height="14" rx="1.5" fill="#f4f4f4" stroke="#d8d8d8"/>
 <rect x="0" y="7" width="15" height="15" rx="1.5" fill="#2a2a2a"/>
 <rect x="7.5" y="7" width="7.5" height="7.5" fill="#b8b8b8"/>
</svg>
<!-- files -->
<svg class="a" style="left:528px;top:639.5px" width="23" height="22" viewBox="0 0 23 22">
 <path d="M0 2a1.5 1.5 0 0 1 1.5-1.5h6l2 2H21a1.5 1.5 0 0 1 1.5 1.5v16A1.5 1.5 0 0 1 21 21.5H1.5A1.5 1.5 0 0 1 0 20z" fill="#e8b93a"/>
 <rect x="0" y="4.5" width="22.5" height="17" rx="1.5" fill="#f8d44c"/>
 <path d="M5 21.5v-4a1.5 1.5 0 0 1 1.5-1.5h9.5a1.5 1.5 0 0 1 1.5 1.5v4z" fill="#2d78c8"/>
</svg>
<!-- edge -->
<svg class="a" style="left:566px;top:639.5px" width="22" height="22" viewBox="0 0 22 22">
 <defs><linearGradient id="eg" x1="0" y1="0" x2="1" y2="1"><stop offset="0" stop-color="#36c27a"/><stop offset=".45" stop-color="#1aa3d8"/><stop offset="1" stop-color="#1660c0"/></linearGradient></defs>
 <circle cx="11" cy="11" r="11" fill="url(#eg)"/>
 <path d="M6 12.5c0-3 2.3-5 5.2-5s5 1.8 5 4.2c0 1.5-1.2 2-2.6 2H9.2c.3 2 2 3.3 4.4 3.3 1.3 0 2.7-.4 3.6-1-1 2.6-3.6 4.2-6.4 4.2C7.6 20.2 6 16.5 6 12.5z" fill="#dff3fb"/>
 <circle cx="12" cy="13" r="2.4" fill="#1a8ad8"/>
</svg>
<!-- ie/edge old -->
<svg class="a" style="left:606px;top:640px" width="21" height="21" viewBox="0 0 21 21">
 <circle cx="10.5" cy="10.5" r="10" fill="#1e9be0"/>
 <path d="M3.5 11.5c2-2.5 4.5-4 8-4.2 2.3-.1 4.2.6 5.5 1.8M4.5 15c2.5-1.8 6-2.8 9.5-2.5 1.5.1 2.8.5 3.5 1" stroke="#e6f6ff" stroke-width="2.2" fill="none"/>
</svg>
<div class="a" style="left:630px;top:633.5px;width:11px;height:11px;border-radius:50%;background:#fff;opacity:.95"></div>
<div class="a" style="left:661px;top:633px;width:9px;height:9px;border-radius:50%;background:#fff;opacity:.5"></div>
<!-- store -->
<svg class="a" style="left:644px;top:638px" width="22" height="24" viewBox="0 0 22 24">
 <path d="M6 4.5a5 5 0 0 1 10 0" fill="none" stroke="#7ab0e8" stroke-width="1.5"/>
 <rect x="0" y="4" width="22" height="19.5" rx="2" fill="#1b4f8c"/>
 <rect x="6.5" y="9" width="4" height="4" fill="#e8542c"/><rect x="11.5" y="9" width="4" height="4" fill="#7bbf3a"/>
 <rect x="6.5" y="14" width="4" height="4" fill="#22a0e8"/><rect x="11.5" y="14" width="4" height="4" fill="#f4b82a"/>
</svg>
<!-- lenovo shield -->
<svg class="a" style="left:684px;top:639px" width="20" height="22" viewBox="0 0 20 22">
 <path d="M10 0.5L19.5 3.5V11c0 5.5-4 9-9.5 10.5C4.5 20 0.5 16.5 0.5 11V3.5z" fill="#1e6fd8"/>
 <path d="M8 5h3.2v9.5H15v3H8z" fill="#fff"/>
</svg>
<!-- green bag -->
<svg class="a" style="left:722.5px;top:640.5px" width="19" height="20" viewBox="0 0 19 20">
 <rect x="0" y="0" width="19" height="20" rx="2.5" fill="#2cbf6e"/>
 <path d="M5 6.5c1 3 2.5 4 4.5 4s3.5-1 4.5-4" fill="none" stroke="#fff" stroke-width="1.6"/>
</svg>
<!-- wechat highlighted -->
<div class="a" style="left:753px;top:632.5px;width:30.5px;height:35px;border-radius:4px;background:#f1dde2"></div>
<svg class="a" style="left:759px;top:641px" width="20" height="16" viewBox="0 0 20 16">
 <ellipse cx="7.5" cy="6.5" rx="7.5" ry="6.5" fill="#2fc25b"/>
 <path d="M3 11l-.5 3 3-2z" fill="#2fc25b"/>
 <ellipse cx="14.5" cy="10.5" rx="5.5" ry="4.5" fill="#f6f6f6" stroke="#ddd" stroke-width=".5"/>
 <circle cx="13" cy="10" r=".8" fill="#999"/><circle cx="16" cy="10" r=".8" fill="#999"/>
</svg>
<div class="a" style="left:768.5px;top:665px;width:5px;height:3px;border-radius:1.5px;background:#c8283c"></div>
<!-- tencent meeting -->
<svg class="a" style="left:799px;top:639.5px" width="20" height="21" viewBox="0 0 20 21">
 <rect x="0" y="0" width="20" height="21" rx="3" fill="#1a78f0"/>
 <path d="M3 14l4.5-6.5 3 3.5 2.5-3.5 4 6.5z" fill="#fff"/>
</svg>
<div class="a" style="left:806.5px;top:665px;width:5px;height:3px;border-radius:1.5px;background:#777"></div>
<!-- word highlighted -->
<div class="a" style="left:831px;top:633px;width:32.5px;height:35px;border-radius:4px;background:#e8eaf2"></div>
<svg class="a" style="left:837px;top:639.5px" width="21" height="21" viewBox="0 0 21 21">
 <rect x="5" y="0" width="16" height="21" rx="1.5" fill="#2568cc"/>
 <rect x="5" y="0" width="16" height="7" rx="1.5" fill="#3f92ec"/>
 <rect x="5" y="6.5" width="16" height="7" fill="#2f7ad8"/>
 <rect x="0" y="4.5" width="12" height="12" rx="1.2" fill="#18469e"/>
 <text x="6" y="14" font-size="9.5" font-weight="bold" fill="#fff" text-anchor="middle" font-family="Liberation Sans">W</text>
</svg>
<div class="a" style="left:840.5px;top:665px;width:14px;height:3px;border-radius:1.5px;background:#2b72d0"></div>
<!-- tray -->
<svg class="a" style="left:886.5px;top:646px" width="12" height="8" viewBox="0 0 12 8" fill="none" stroke="#333" stroke-width="1.2"><path d="M1 7l5-5.5L11 7"/></svg>
<svg class="a" style="left:912px;top:642.5px" width="17" height="16" viewBox="0 0 17 16" fill="none" stroke="#333" stroke-width="1.2">
 <path d="M2 6.5A6 6 0 0 1 12.5 3.5M14 9.5A6 6 0 0 1 3.5 12.5"/><path d="M12.8 1v3h-3M3.2 15v-3h3"/>
 <circle cx="12.5" cy="12" r="3.5" fill="#e0202a" stroke="none"/></svg>
<svg class="a" style="left:940px;top:645px" width="13" height="10" viewBox="0 0 13 10">
 <ellipse cx="5.5" cy="5" rx="5.5" ry="4.5" fill="#2fbf5a"/><ellipse cx="10" cy="7" rx="3" ry="2.5" fill="#e8e8e8"/></svg>
<svg class="a" style="left:969px;top:642.5px" width="15" height="15" viewBox="0 0 15 15">
 <rect width="15" height="15" rx="3" fill="#e8641e"/><path d="M3.5 3.5h3l5 8h-3zM3.5 7v4.5h3" fill="#fff"/></svg>
<svg class="a" style="left:999px;top:642.5px" width="12" height="16" viewBox="0 0 12 16" fill="none" stroke="#3a6fd8" stroke-width="1.3">
 <rect x="3.5" y="0.8" width="5" height="9" rx="2.5"/><path d="M1 7a5 5 0 0 0 10 0M6 12v3.5"/></svg>
<div class="t" style="left:1025px;top:643px;font-size:13px;color:#222">中</div>
<svg class="a" style="left:1053.5px;top:645px" width="15" height="11" viewBox="0 0 15 11" fill="none" stroke="#222" stroke-width="1.2">
 <path d="M1 4a9 9 0 0 1 13 0M3 6.3a6 6 0 0 1 9 0M5 8.5a3 3 0 0 1 5 0"/><circle cx="7.5" cy="10" r=".8" fill="#222"/></svg>
<svg class="a" style="left:1074px;top:644.5px" width="13" height="12" viewBox="0 0 13 12" fill="none" stroke="#222" stroke-width="1.1">
 <path d="M1 4h2.5L7 1v10L3.5 8H1z"/><path d="M9 3.5a3.5 3.5 0 0 1 0 5M10.8 2a6 6 0 0 1 0 8"/></svg>
<svg class="a" style="left:1095px;top:642.5px" width="15" height="13" viewBox="0 0 15 13" fill="none" stroke="#222" stroke-width="1.1">
 <rect x="1" y="4.5" width="11.5" height="7.5" rx="1"/><path d="M13 7v3" stroke-width="1.5"/><path d="M2.5 6h6v4.5h-6z" fill="#222"/><path d="M3 0.5l2 3 2-2" stroke-width="1"/></svg>
<div class="t" style="left:1146.5px;top:637.5px;font-size:11px;color:#222;letter-spacing:-0.1px">15:38</div>
<div class="t" style="left:1124px;top:652px;font-size:11px;color:#222;letter-spacing:-0.3px">2022/12/8</div>
<svg class="a" style="left:1179px;top:643px" width="13" height="15" viewBox="0 0 13 15">
 <path d="M6.5 1.5c-2.5 0-4 2-4 4.5v3.5L1 11.5h11L10.5 9.5V6c0-2.5-1.5-4.5-4-4.5z" fill="#222"/><rect x="5" y="12.5" width="3" height="2" rx="1" fill="#222"/>
 <text x="8" y="6.5" font-size="5.5" fill="#fff" font-family="Liberation Sans" font-weight="bold">z</text></svg>

<div id="nav" class="a"></div>
<svg class="a" style="left:1296px;top:0" width="71" height="672" viewBox="1296 0 71 672" fill="none" stroke="#bdbdbd" stroke-width="2.2">
 <rect x="1320" y="179.5" width="24" height="25.5" rx="2.5"/>
 <circle cx="1331.8" cy="336" r="13.8"/>
 <path d="M1321 478.5L1342 464.5V492.5Z" stroke-linejoin="round"/>
</svg>

<div class="a" style="left:1012px;top:102px;width:263px;height:187px;border-radius:6px;overflow:hidden;background:#dcdcdc">
<svg width="263" height="187" viewBox="0 0 263 187">
 <defs>
  <linearGradient id="mg2" x1="0" y1="0" x2="0" y2="1"><stop offset="0" stop-color="#a0e2ac"/><stop offset="1" stop-color="#30b54c"/></linearGradient>
  <filter id="bl" x="-5%" y="-5%" width="110%" height="110%"><feGaussianBlur stdDeviation="1"/></filter>
  <linearGradient id="cur" x1="0" x2="1">
   <stop offset="0" stop-color="#b8b6b4"/><stop offset=".1" stop-color="#dcdad8"/><stop offset=".2" stop-color="#9e9a96"/>
   <stop offset=".32" stop-color="#d4d2d0"/><stop offset=".44" stop-color="#969290"/><stop offset=".56" stop-color="#cfcdca"/>
   <stop offset=".68" stop-color="#9a9692"/><stop offset=".8" stop-color="#c8c6c2"/><stop offset=".9" stop-color="#a09c98"/><stop offset="1" stop-color="#d0cecc"/>
  </linearGradient>
  <linearGradient id="cur2" x1="0" x2="1">
   <stop offset="0" stop-color="#c4c4c8"/><stop offset=".3" stop-color="#9c9ca4"/><stop offset=".6" stop-color="#d6d6da"/><stop offset="1" stop-color="#a8a8ae"/>
  </linearGradient>
  <linearGradient id="wall" x1="0" y1="0" x2="0" y2="1"><stop offset="0" stop-color="#e8e8e8"/><stop offset="1" stop-color="#d4d4d6"/></linearGradient>
  <radialGradient id="head" cx=".5" cy=".5" r=".62"><stop offset="0" stop-color="#dcd0c6"/><stop offset=".7" stop-color="#cbbdb2"/><stop offset="1" stop-color="#a89888"/></radialGradient>
 </defs>
 <g filter="url(#bl)">
 <rect width="263" height="187" fill="url(#wall)"/>
 <!-- ceiling -->
 <path d="M100 0H197V50H118z" fill="#f0f0f0"/>
 <path d="M116 48H197v3H118z" fill="#dedede"/>
 <!-- right column -->
 <path d="M197 0H263V187H197z" fill="#e2e2e2"/>
 <path d="M197 0H263V56H197z" fill="#eeeeee"/>
 <path d="M197 56H263v4H197z" fill="#d4d4d4"/>
 <path d="M220 60L228 187" stroke="#cacaca" stroke-width="2.5"/>
 <path d="M255 0L263 30V0z" fill="#fbfbfb"/>
 <!-- window -->
 <rect x="0" y="0" width="22" height="187" fill="url(#cur2)"/>
 <rect x="22" y="0" width="55" height="187" fill="#f3f5f7"/>
 <path d="M49 0L31 187" stroke="#4a5058" stroke-width="1.4"/>
 <path d="M54 0L38 187" stroke="#8a9aa4" stroke-width="1.2"/>
 <path d="M57 0H78V40H62z" fill="#c6e0ea" opacity=".8"/>
 <path d="M62 12v11" stroke="#c83040" stroke-width="2"/>
 <!-- curtain -->
 <path d="M74 0H112L116 142H74z" fill="url(#cur)"/>
 <!-- person right -->
 <path d="M239 187V132c1-9 6-12 12-12s11 3 12 10V187z" fill="#30323c"/>
 <ellipse cx="253" cy="112" rx="10" ry="8.5" fill="#1e1e22"/>
 <ellipse cx="249" cy="119" rx="4.5" ry="4.5" fill="#cdb8aa"/>
 <!-- coat -->
 <path d="M66 187L70 140C74 132 86 128 104 112L120 106H164L168 108C176 124 194 130 204 138C212 146 218 165 221 187z" fill="#1e202c"/>
 <path d="M104 112C114 132 118 160 120 187H106L92 128z" fill="#15171f"/>
 <path d="M166 110L182 132 172 187H152z" fill="#191b25"/>
 <path d="M128 126h24l-5 14h-14z" fill="#3c3c44"/>
 <path d="M148 132C150 152 142 170 138 187" stroke="#d0d0d0" stroke-width="1" fill="none"/>
 <!-- head -->
 <path d="M115 96C114 72 124 60 142 60S170 72 169 96C169 122 158 137 142 137S115 122 115 96z" fill="url(#head)"/>
 <path d="M116 84C118 68 128 60 142 60S166 68 168 84C160 74 152 71 142 71S124 74 116 84z" fill="#b4aaa2"/>
 <path d="M116 91h23.5v11.5h-21.5zM144.5 91h23.5v11.5h-21.5z" fill="rgba(220,228,235,.22)" stroke="#4a4a4a" stroke-width="1.1"/>
 <path d="M139.5 94h5" stroke="#4a4a4a" stroke-width="1"/>
 <path d="M132 117.5h14" stroke="#6e5048" stroke-width="2.6" fill="none"/>
 </g>
 <!-- label band -->
 <rect x="0" y="143" width="9" height="44" fill="#2f2f31"/>
 <linearGradient id="band" x1="0" x2="1"><stop offset="0" stop-color="rgb(50,50,52)" stop-opacity=".72"/><stop offset=".7" stop-color="rgb(50,50,52)" stop-opacity=".72"/><stop offset="1" stop-color="rgb(30,30,34)" stop-opacity=".3"/></linearGradient>
 <rect x="9" y="143" width="100" height="44" fill="url(#band)"/>
 <g transform="translate(8.5,152)">
  <rect x="5.5" y="0" width="11" height="19" rx="5.5" fill="#fafafa"/>
  <path d="M5.5 13.5h11v0a5.5 5.5 0 0 1-11 0z" fill="url(#mg2)"/>
  <path d="M1.5 13a9.5 9.5 0 0 0 19 0" fill="none" stroke="#fafafa" stroke-width="2.2"/>
  <path d="M11 22.5v4" stroke="#fafafa" stroke-width="2.2"/>
 </g>
</svg>
<div class="t" style="left:38.5px;top:156px;font-size:21px;color:#fff;letter-spacing:-0.5px">蒋光明</div>
</div>

<div class="a" style="left:52px;top:210px;width:464px;height:190.5px;background:linear-gradient(to bottom,rgba(27,27,29,0) 0px,rgba(27,27,29,.1) 14px,rgba(27,27,29,.28) 30px,rgba(27,27,29,.42) 45px,rgba(27,27,29,.42) 100%)"></div>
<div class="t" style="left:63px;top:219.5px;font-size:21px;letter-spacing:0px;color:rgba(180,118,58,.72);-webkit-mask-image:linear-gradient(to right,#000 0,#000 238px,rgba(0,0,0,.15) 258px,rgba(0,0,0,.08) 100%)">欢迎进入腾讯会议网络研讨会(webinar)</div>
<div class="t" style="left:63px;top:244px;font-size:22px;letter-spacing:-1px;line-height:31.1px;color:#fafafa;white-space:pre">请大家共同维护大会秩序。会议过程中禁止出现
违法违规、低俗色情、吸烟酗酒等内容，若发现
违规行为请及时向我们反馈。如主办方在会议过
程中引导交易，请谨慎判断，注意财产安全，谨
防诈骗!</div>

<div class="a" style="left:87px;top:609px;width:148px;height:44px;background:rgba(13,13,13,.54)"></div>
<svg class="a" style="left:29.5px;top:617.5px" width="23" height="27" viewBox="0 0 23 27">
  <defs><linearGradient id="mg" x1="0" y1="0" x2="0" y2="1"><stop offset="0" stop-color="#9be0a8"/><stop offset="1" stop-color="#34b850"/></linearGradient></defs>
  <rect x="5.5" y="0.5" width="11" height="19" rx="5.5" fill="#fafafa"/>
  <path d="M5.5 14h11v0.5a5.5 5.5 0 0 1-11 0z" fill="url(#mg)"/>
  <path d="M1.5 13.5a9.5 9.5 0 0 0 19 0" fill="none" stroke="#fafafa" stroke-width="2.2"/>
  <path d="M11 23v4" stroke="#fafafa" stroke-width="2.2"/>
</svg>
<div class="t" style="left:60px;top:621.5px;font-size:21px;color:#fff;letter-spacing:-0.2px">蒋光明的屏幕共享</div>

</body></html>
